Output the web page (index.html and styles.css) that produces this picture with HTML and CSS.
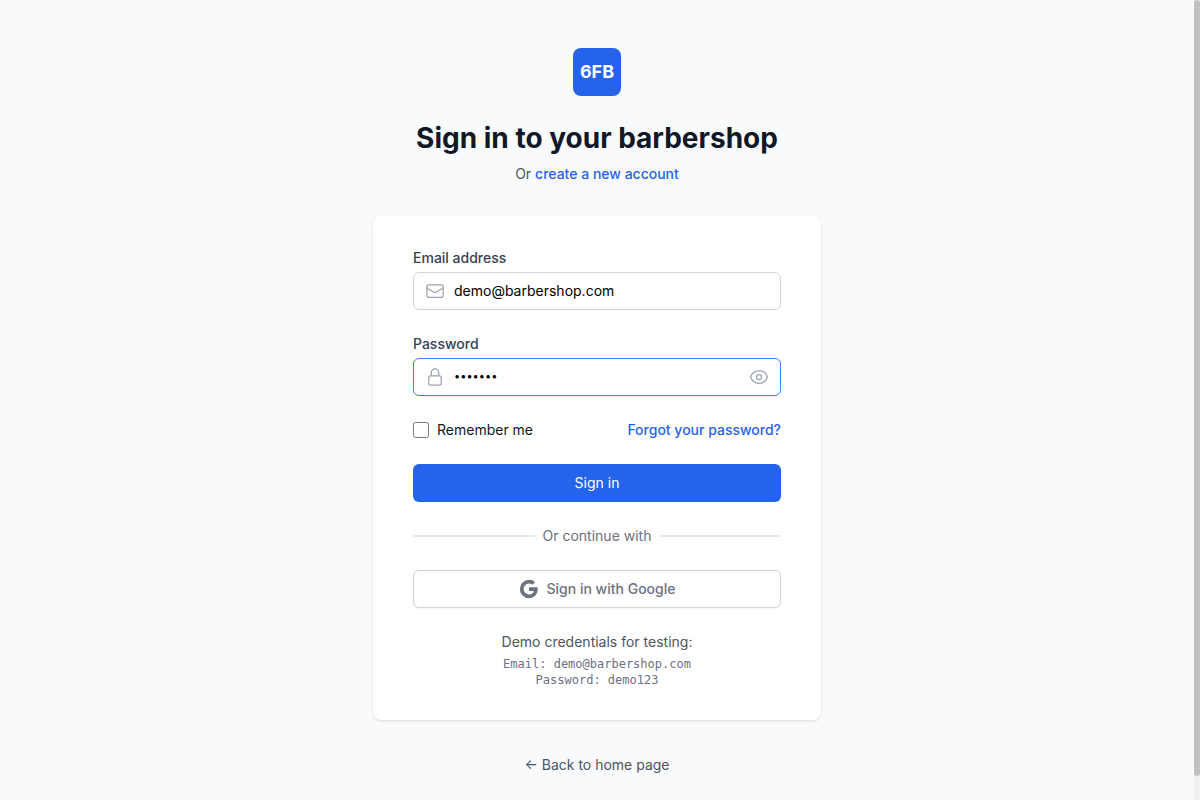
FILE: index.html
```html
<!DOCTYPE html>
<html lang="en">
<head>
<meta charset="utf-8">
<meta name="viewport" content="width=device-width, initial-scale=1">
<title>Sign in</title>
<link rel="stylesheet" href="styles.css">
</head>
<body>
<div class="shell">
<main class="page">
  <header class="intro">
    <div class="logo">6FB</div>
    <h1 class="title">Sign in to your barbershop</h1>
    <p class="subtitle">Or <a class="link" href="#register">create a new account</a></p>
  </header>

  <section class="card">
    <form class="form">
      <div class="field">
        <label class="label" for="email">Email address</label>
        <div class="control">
          <svg class="icon" viewBox="0 0 24 24" aria-hidden="true"><path d="M21.75 6.75v10.5a2.25 2.25 0 01-2.25 2.25h-15a2.25 2.25 0 01-2.25-2.25V6.75m19.5 0A2.25 2.25 0 0019.5 4.5h-15a2.25 2.25 0 00-2.25 2.25m19.5 0v.243a2.25 2.25 0 01-1.07 1.916l-7.5 4.615a2.25 2.25 0 01-2.36 0L3.32 8.91a2.25 2.25 0 01-1.07-1.916V6.75"/></svg>
          <input class="input" id="email" type="email" value="demo@barbershop.com">
        </div>
      </div>

      <div class="field">
        <label class="label" for="password">Password</label>
        <div class="control control-active">
          <svg class="icon" viewBox="0 0 24 24" aria-hidden="true"><path d="M16.5 10.5V6.75a4.5 4.5 0 10-9 0v3.75m-.75 11.25h10.5a2.25 2.25 0 002.25-2.25v-6.75a2.25 2.25 0 00-2.25-2.25H6.75a2.25 2.25 0 00-2.25 2.25v6.75a2.25 2.25 0 002.25 2.25z"/></svg>
          <input class="input input-password" id="password" type="password" value="demo123">
          <button class="reveal" type="button" aria-label="Show password">
            <svg class="icon" viewBox="0 0 24 24" aria-hidden="true"><path d="M2.036 12.322a1.012 1.012 0 010-.639C3.423 7.51 7.36 4.5 12 4.5c4.638 0 8.573 3.007 9.963 7.178.07.207.07.431 0 .639C20.577 16.49 16.64 19.5 12 19.5c-4.638 0-8.573-3.007-9.963-7.178z"/><path d="M15 12a3 3 0 11-6 0 3 3 0 016 0z"/></svg>
          </button>
        </div>
      </div>

      <div class="options">
        <div class="remember">
          <input class="checkbox" id="remember" type="checkbox">
          <label for="remember">Remember me</label>
        </div>
        <a class="link" href="#forgot">Forgot your password?</a>
      </div>

      <button class="button button-primary" type="button">Sign in</button>

      <div class="divider">Or continue with</div>

      <button class="button button-google" type="button">
        <svg class="google" viewBox="2.2 2.2 19.5 19.5" aria-hidden="true"><path d="M20.283 10.356h-8.327v3.451h4.792c-.446 2.193-2.313 3.453-4.792 3.453a5.27 5.27 0 0 1-5.279-5.28 5.27 5.27 0 0 1 5.279-5.279c1.259 0 2.397.447 3.29 1.178l2.6-2.599c-1.584-1.381-3.615-2.233-5.89-2.233a8.908 8.908 0 0 0-8.934 8.934 8.907 8.907 0 0 0 8.934 8.934c4.467 0 8.529-3.249 8.529-8.934 0-.528-.081-1.097-.202-1.625z"/></svg>
        Sign in with Google
      </button>
    </form>

    <div class="demo">
      <p class="demo-title">Demo credentials for testing:</p>
      <p class="demo-line">Email: demo@barbershop.com</p>
      <p class="demo-line">Password: demo123</p>
    </div>
  </section>

  <p class="back"><a class="back-link" href="#home">← Back to home page</a></p>
</main>
<div class="rail" aria-hidden="true"><div class="thumb"></div></div>
</div>
</body>
</html>
```

FILE: styles.css
```css
*, *::before, *::after { box-sizing: border-box; }

html { scrollbar-width: none; }

body {
  margin: 0;
  background: #f9fafb;
  color: #111827;
  font-family: Inter, "Liberation Sans", sans-serif;
  font-size: 14px;
  line-height: 20px;
}

h1, p { margin: 0; }
a { text-decoration: none; }
button, input { font: inherit; }
button { cursor: pointer; }

.shell { display: grid; grid-template-columns: 1fr 6px; }

.rail {
  position: sticky;
  top: 0;
  height: 100vh;
  background: #f1f1f1;
}
.thumb { height: 97%; border-radius: 3px; background: #c1c1c1; }

.page {
  display: flex;
  flex-direction: column;
  align-items: center;
  min-height: 100vh;
  padding: 48px 32px;
}

.intro {
  display: flex;
  flex-direction: column;
  align-items: center;
  text-align: center;
}

.logo {
  display: flex;
  align-items: center;
  justify-content: center;
  width: 48px;
  height: 48px;
  border-radius: 8px;
  background: #2563eb;
  color: #fff;
  font-size: 18px;
  line-height: 28px;
  font-weight: 700;
}

.title {
  margin-top: 24px;
  font-size: 28px;
  line-height: 36px;
  font-weight: 700;
}

.subtitle { margin-top: 8px; color: #4b5563; }
.link { color: #2563eb; font-weight: 500; }

.card {
  width: 100%;
  max-width: 448px;
  margin-top: 32px;
  padding: 32px 40px;
  border-radius: 8px;
  background: #fff;
  box-shadow: 0 1px 3px rgba(0, 0, 0, 0.1), 0 1px 2px -1px rgba(0, 0, 0, 0.1);
}

.form { display: flex; flex-direction: column; gap: 24px; }
.field { display: flex; flex-direction: column; gap: 4px; }
.label { color: #374151; font-weight: 500; }

.control {
  display: flex;
  align-items: center;
  gap: 8px;
  padding: 0 11px;
  border: 1px solid #d1d5db;
  border-radius: 6px;
  background: #fff;
}
.control-active { border-color: #3b82f6; }

.icon {
  display: block;
  flex: none;
  width: 20px;
  height: 20px;
  fill: none;
  stroke: #9ca3af;
  stroke-width: 1.5;
  stroke-linecap: round;
  stroke-linejoin: round;
}

.input {
  flex: 1;
  min-width: 0;
  height: 36px;
  padding: 0 1px 2px;
  border: 0;
  outline: 0;
  background: transparent;
  color: #000;
}
.input-password { font-size: 11px; }

.reveal { padding: 0; border: 0; background: none; }

.options { display: flex; align-items: center; justify-content: space-between; }
.remember { display: flex; align-items: center; gap: 8px; }
.checkbox { width: 16px; height: 16px; margin: 0; }

.button {
  display: flex;
  align-items: center;
  justify-content: center;
  gap: 8px;
  padding: 8px 16px;
  border: 1px solid transparent;
  border-radius: 6px;
}
.button-primary { background: #2563eb; color: #fff; }
.button-google {
  border-color: #d1d5db;
  background: #fff;
  color: #6b7280;
  font-weight: 500;
  box-shadow: 0 1px 2px rgba(0, 0, 0, 0.05);
}
.google { width: 20px; height: 20px; fill: currentColor; }

.divider { display: flex; align-items: center; gap: 8px; color: #6b7280; }
.divider::before,
.divider::after {
  content: "";
  flex: 1;
  height: 2px;
  background: #e5e7eb;
}

.demo { margin-top: 24px; text-align: center; }
.demo-title { margin-bottom: 4px; color: #4b5563; }
.demo-line {
  color: #6b7280;
  font-family: "DejaVu Sans Mono", monospace;
  font-size: 12px;
  line-height: 16px;
}

.back { margin-top: 32px; font-size: 16px; line-height: 24px; }
.back-link { color: #4b5563; font-size: 14px; }
```
